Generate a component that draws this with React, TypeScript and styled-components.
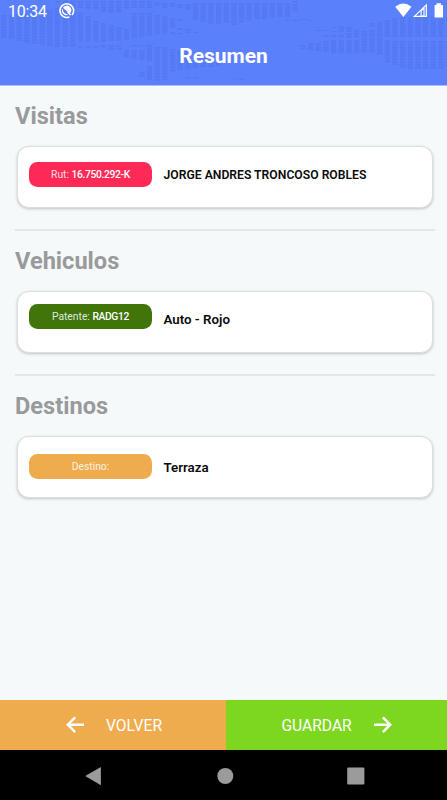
import React from "react";
import styled, { createGlobalStyle } from "styled-components";

const GlobalStyle = createGlobalStyle`
  * { box-sizing: border-box; }
  body { margin: 0; background: #000; }
`;

const Screen = styled.div`
  width: 100%;
  height: 100vh;
  min-height: 800px;
  display: flex;
  flex-direction: column;
  background: #f5f9fa;
  font-family: Roboto, "Liberation Sans", sans-serif;
  overflow: hidden;
`;

const Header = styled.header`
  position: relative;
  height: 86px;
  flex: none;
  background: #5b80fc;
  border-bottom: 1px solid #a9bcfb;
  color: #fff;
`;

const Pattern = styled.svg`
  position: absolute;
  inset: 0;
  display: block;
`;

const StatusBar = styled.div`
  position: relative;
  height: 24px;
  display: flex;
  align-items: flex-start;
  padding: 0 0 0 8px;
`;

const Clock = styled.span`
  font-size: 16px;
  line-height: 23px;
  width: 50px;
  letter-spacing: -0.2px;
`;

const StatusIcons = styled.svg`
  display: block;
  margin-left: auto;
`;

const SyncIcon = styled.svg`
  display: block;
  margin-top: 2px;
`;

const Title = styled.h1`
  position: relative;
  margin: 18px 0 0;
  font-size: 21px;
  line-height: 28px;
  font-weight: 700;
  text-align: center;
`;

const Content = styled.main`
  flex: 1;
  padding: 0 12px 0 15px;
`;

const Section = styled.section`
  height: 145px;
  display: flex;
  flex-direction: column;
`;

const Heading = styled.h2`
  margin: 14px 0 0;
  height: 32px;
  color: #999a9b;
  font-size: 23.6px;
  line-height: 32px;
  font-weight: 700;
`;

const Card = styled.div`
  display: flex;
  align-items: flex-start;
  margin: 14px 2px 0;
  height: 62px;
  padding-left: 11px;
  border: 1px solid #dcdfe0;
  border-radius: 12px;
  background: #fff;
  box-shadow: 0 1px 3px rgba(0, 0, 0, 0.22);
`;

const Badge = styled.div<{ $color: string; $top: number }>`
  width: 123px;
  height: 25px;
  flex: none;
  margin-top: ${(p) => p.$top}px;
  border-radius: 8.5px;
  background: ${(p) => p.$color};
  color: rgba(255, 255, 255, 0.86);
  font-size: 10.3px;
  line-height: 26px;
  text-align: center;
  white-space: pre;

  b {
    color: #fff;
    font-weight: 500;
    letter-spacing: -0.35px;
  }
`;

const Detail = styled.div<{ $top: number; $size: number }>`
  margin: ${(p) => p.$top}px 0 0 11.5px;
  color: #0b0b0b;
  font-size: ${(p) => p.$size}px;
  line-height: 18px;
  font-weight: 600;
  white-space: nowrap;
`;

const Divider = styled.div`
  height: 2px;
  margin-top: 21px;
  background: #e4e7e8;
`;

const Actions = styled.div`
  display: flex;
  height: 50px;
  flex: none;
`;

const Action = styled.button<{ $color: string; $width: string; $pad: number }>`
  display: flex;
  align-items: center;
  width: ${(p) => p.$width};
  padding: 0 0 0 ${(p) => p.$pad}px;
  border: 0;
  background: ${(p) => p.$color};
  color: #fff;
  font-family: inherit;
  font-size: 15.6px;
  line-height: 20px;
  gap: 22.5px;

  span { padding-top: 2px; }
`;

const NavBar = styled.nav`
  height: 50px;
  flex: none;
  background: #000;
`;

/* Per column: start/end pairs (px) of its dashed runs. */
const columns: number[][] = [
  [15, 38], [15, 39], [14, 41], [14, 43], [13, 44], [13, 45], [10, 46],
  [1, 3, 8, 47], [1, 3, 7, 47], [1, 8, 11, 47], [1, 8, 12, 42, 46, 48],
  [1, 9, 16, 42, 46, 48], [1, 10, 21, 42, 46, 48], [1, 12, 23, 42, 45, 48],
  [1, 13, 25, 41, 45, 50], [1, 13, 27, 41, 45, 50],
  [1, 9, 29, 40, 50, 57], [1, 8, 13, 38, 45, 46, 50, 59],
  [1, 8, 13, 37, 45, 46, 50, 60, 72, 77], [1, 8, 13, 36, 45, 61, 66, 80],
  [2, 6, 15, 34, 47, 81], [3, 8, 16, 34, 47, 80], [3, 7, 18, 28, 32, 35, 49, 72],
  [4, 8, 19, 21, 28, 30, 33, 34, 50, 70], [4, 10, 29, 33, 51, 69, 77, 78],
  [3, 20, 32, 33, 52, 68, 77, 78], [3, 22, 54, 67], [3, 24, 57, 67],
  [3, 24, 60, 66], [3, 23], [3, 25, 78, 79], [3, 23, 79, 80], [3, 21],
  [3, 19], [3, 19], [3, 18], [3, 17], [3, 17, 20, 21], [1, 3, 4, 11, 20, 21],
  [19, 20, 45, 49], [20, 21, 43, 50], [30, 31, 43, 51],
  [30, 31, 35, 38, 41, 52], [27, 28, 31, 32, 35, 38, 40, 53],
  [26, 32, 35, 38, 40, 53], [27, 32, 33, 38, 40, 53],
  [30, 38, 40, 53], [31, 37, 38, 53], [23, 27, 30, 37, 38, 53],
  [22, 37, 38, 55], [20, 37, 40, 63], [18, 37, 41, 65],
  [17, 37, 41, 68], [17, 37, 41, 69], [17, 37, 41, 69],
  [17, 37, 41, 69], [17, 37, 41, 69], [17, 37, 41, 69], [17, 37, 41, 67],
];

function HeaderPattern() {
  return (
    <Pattern width="447" height="85">
      {columns.map((runs, i) => {
        const x = 3.8 + i * 7.67;
        const marks: React.ReactNode[] = [];
        for (let r = 0; r < runs.length; r += 2) {
          marks.push(
            <g key={r}>
              <line x1={x} x2={x} y1={runs[r]} y2={runs[r + 1]} stroke="#5378ef" strokeOpacity="0.5" strokeWidth="5" />
              <line x1={x} x2={x} y1={runs[r]} y2={runs[r + 1]} stroke="#4b70e6" strokeOpacity="0.28" strokeWidth="5" strokeDasharray="1.6 1.3" />
            </g>
          );
        }
        return <g key={i}>{marks}</g>;
      })}
    </Pattern>
  );
}

const Arrow = ({ right = false }: { right?: boolean }) => (
  <svg width="18" height="18" viewBox="0 -1 18 18" fill="none" stroke="#fff" strokeWidth="2.5">
    {right ? <path d="M0 7.7H16.2M8.8 0.3L16.2 7.7L8.8 15.1" /> : <path d="M18 7.7H1.8M9.2 0.3L1.8 7.7L9.2 15.1" />}
  </svg>
);

interface Item {
  title: string;
  color: string;
  label: string;
  value: string;
  detail: string;
  badgeTop: number;
  detailTop: number;
  size: number;
}

const items: Item[] = [
  { title: "Visitas", color: "#ff2b56", label: "Rut: ", value: "16.750.292-K", detail: "JORGE ANDRES TRONCOSO ROBLES", badgeTop: 15, detailTop: 19, size: 12.2 },
  { title: "Vehiculos", color: "#41750a", label: "Patente: ", value: "RADG12", detail: "Auto - Rojo", badgeTop: 12, detailTop: 19, size: 13.3 },
  { title: "Destinos", color: "#efac4e", label: "Destino:", value: "", detail: "Terraza", badgeTop: 17, detailTop: 22, size: 13.3 },
];

export default function App() {
  return (
    <>
      <GlobalStyle />
      <Screen>
        <Header>
          <HeaderPattern />
          <StatusBar>
            <Clock>10:34</Clock>
            <SyncIcon width="17" height="17" viewBox="0 0 17 17" fill="none" stroke="#fff">
              <path d="M14 13A6.8 6.8 0 1 0 11.4 14.9" strokeWidth="1.6" />
              <path d="M5 5.6A4.6 4.6 0 0 1 12.6 10.8L11.2 11.2L9.6 9.6L8.6 9.4L8.2 8.2L6.6 7.6Z" fill="#fff" stroke="none" />
              <path d="M4.5 7.4A4.3 4.3 0 0 0 9.4 12.5" strokeWidth="1.3" />
              <path d="M9.4 9.8L12.6 13" strokeWidth="1.5" />
            </SyncIcon>
            <StatusIcons width="52" height="24" viewBox="395 0 52 24">
              <path d="M395.2 6.7Q403.3 0.2 411.5 6.7L403.4 17Z" fill="#fff" />
              <path d="M414.4 16.4L426.3 4.8V16.4Z" fill="none" stroke="#fff" strokeWidth="1.2" />
              <path d="M421.1 16V11L424 8.2V16Z" fill="none" stroke="#fff" strokeWidth="1.1" />
              <path d="M436.5 3.3H441V5H443V17.5H434.6V5H436.5Z" fill="#fff" />
            </StatusIcons>
          </StatusBar>
          <Title>Resumen</Title>
        </Header>
        <Content>
          {items.map((item, i) => (
            <Section key={item.title}>
              <Heading>{item.title}</Heading>
              <Card>
                <Badge $color={item.color} $top={item.badgeTop}>
                  {item.label}
                  <b>{item.value}</b>
                </Badge>
                <Detail $top={item.detailTop} $size={item.size}>{item.detail}</Detail>
              </Card>
              {i < items.length - 1 && <Divider />}
            </Section>
          ))}
        </Content>
        <Actions>
          <Action $color="#efac4e" $width="225.5px" $pad={65.5}>
            <Arrow />
            <span>VOLVER</span>
          </Action>
          <Action $color="#7ed71f" $width="221.5px" $pad={56}>
            <span>GUARDAR</span>
            <Arrow right />
          </Action>
        </Actions>
        <NavBar>
          <svg width="447" height="50" viewBox="0 750 447 50" fill="#9b9b9b">
            <path d="M85.2 776.1L100.9 767V785.2Z" />
            <circle cx="225.3" cy="776" r="8" />
            <rect x="347.2" y="767.4" width="17.2" height="17.2" rx="1" />
          </svg>
        </NavBar>
      </Screen>
    </>
  );
}
